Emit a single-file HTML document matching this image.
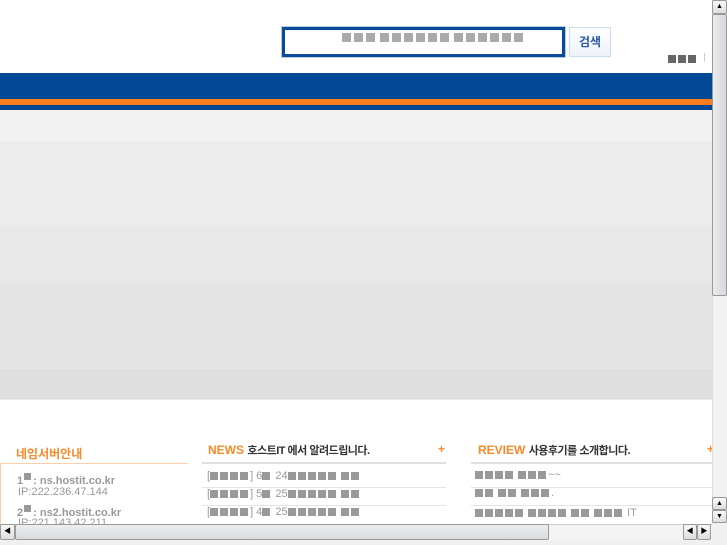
<!DOCTYPE html>
<html><head><meta charset="utf-8"><style>
*{margin:0;padding:0;box-sizing:border-box}
body{width:727px;height:545px;overflow:hidden;background:#fff;font-family:"Liberation Sans","Noto Sans CJK KR",sans-serif;position:relative}
.a{position:absolute}
.sq{display:inline-block;width:8px;height:8px;background:#999;margin-right:2px;vertical-align:middle}
.sq.d{background:#666}
.s2{display:inline-block;width:9px;height:9px;background:#aaa;margin-right:3px;vertical-align:middle}
.t{font-size:11px;color:#999;white-space:nowrap}
.line{position:absolute;height:1px;background:#e4e4e4}
</style></head><body>
<div class="a" style="left:282px;top:27px;width:283px;height:30px;border:3px solid #0a4a9a;background:#fff;box-shadow:0 0 0 1px #bcd"></div>
<div class="a" style="left:342px;top:33px;white-space:nowrap;line-height:9px"><span class="s2"></span><span class="s2"></span><span class="s2" style="margin-right:5px"></span><span class="s2"></span><span class="s2"></span><span class="s2"></span><span class="s2"></span><span class="s2"></span><span class="s2" style="margin-right:5px"></span><span class="s2"></span><span class="s2"></span><span class="s2"></span><span class="s2"></span><span class="s2"></span><span class="s2"></span></div>
<div class="a" style="left:569px;top:27px;width:42px;height:30px;border:1px solid #cddcef;background:linear-gradient(#fff,#eef3fa);color:#2a5aa8;font-size:12px;font-weight:bold;text-align:center;line-height:28px">검색</div>
<div class="a" style="left:668px;top:50px;white-space:nowrap"><span class="sq d"></span><span class="sq d"></span><span class="sq d"></span></div>
<div class="a" style="left:704px;top:53px;width:1px;height:9px;background:#ccc"></div>
<div class="a" style="left:0;top:73px;width:712px;height:26px;background:#004896"></div>
<div class="a" style="left:0;top:99px;width:712px;height:6px;background:#fb7d1b"></div>
<div class="a" style="left:0;top:105px;width:712px;height:5px;background:#004896"></div>
<div class="a" style="left:0;top:110px;width:712px;height:31px;background:#f2f2f2"></div>
<div class="a" style="left:0;top:141px;width:712px;height:86px;background:#ececec"></div>
<div class="a" style="left:0;top:227px;width:712px;height:57px;background:#e8e8e8"></div>
<div class="a" style="left:0;top:284px;width:712px;height:86px;background:#e3e4e3"></div>
<div class="a" style="left:0;top:370px;width:712px;height:29px;background:#dedede"></div>
<div class="a" style="left:0;top:399px;width:712px;height:1px;background:#e8eaee"></div>
<div class="a" style="left:16px;top:445px;font-size:12px;font-weight:bold;color:#f58a2a">네임서버안내</div>
<div class="a" style="left:0;top:463px;width:188px;height:61px;border-top:1px solid #fbcfae;border-left:1px solid #fbcfae"></div>
<div class="a" style="left:17px;top:473px;font-size:11px;font-weight:bold;color:#999">1<span class="sq" style="width:7px;height:7px;vertical-align:4px;margin:0 2px 0 1px"></span>: ns.hostit.co.kr</div>
<div class="a t" style="left:18px;top:486px">IP:222.236.47.144</div>
<div class="a" style="left:17px;top:505px;font-size:11px;font-weight:bold;color:#999">2<span class="sq" style="width:7px;height:7px;vertical-align:4px;margin:0 2px 0 1px"></span>: ns2.hostit.co.kr</div>
<div class="a t" style="left:18px;top:517px">IP:221.143.42.211</div>
<div class="a" style="left:208px;top:442px;font-size:12px;white-space:nowrap"><span style="color:#f58a2a;font-weight:bold">NEWS</span> <span style="font-size:11px;font-weight:bold;color:#333;letter-spacing:-0.5px">호스트IT 에서 알려드립니다.</span></div>
<div class="a" style="left:438px;top:442px;color:#f58a2a;font-size:12px;font-weight:bold">+</div>
<div class="a" style="left:202px;top:462px;width:244px;height:2px;background:#e0e0e0"></div>
<div class="line" style="left:202px;top:487px;width:244px"></div>
<div class="line" style="left:202px;top:505px;width:244px"></div>
<div class="a t" style="left:207px;top:470px">[<span class="sq"></span><span class="sq"></span><span class="sq"></span><span class="sq"></span>] 6<span class="sq"></span> 24<span class="sq"></span><span class="sq"></span><span class="sq"></span><span class="sq"></span><span class="sq" style="margin-right:5px"></span><span class="sq"></span><span class="sq"></span></div>
<div class="a t" style="left:207px;top:488px">[<span class="sq"></span><span class="sq"></span><span class="sq"></span><span class="sq"></span>] 5<span class="sq"></span> 25<span class="sq"></span><span class="sq"></span><span class="sq"></span><span class="sq"></span><span class="sq" style="margin-right:5px"></span><span class="sq"></span><span class="sq"></span></div>
<div class="a t" style="left:207px;top:506px">[<span class="sq"></span><span class="sq"></span><span class="sq"></span><span class="sq"></span>] 4<span class="sq"></span> 25<span class="sq"></span><span class="sq"></span><span class="sq"></span><span class="sq"></span><span class="sq" style="margin-right:5px"></span><span class="sq"></span><span class="sq"></span></div>
<div class="a" style="left:478px;top:442px;font-size:12px;white-space:nowrap"><span style="color:#f58a2a;font-weight:bold">REVIEW</span> <span style="font-size:11px;font-weight:bold;color:#333;letter-spacing:-0.5px">사용후기를 소개합니다.</span></div>
<div class="a" style="left:707px;top:442px;color:#f58a2a;font-size:12px;font-weight:bold">+</div>
<div class="a" style="left:471px;top:462px;width:241px;height:2px;background:#e0e0e0"></div>
<div class="line" style="left:471px;top:487px;width:241px"></div>
<div class="line" style="left:471px;top:505px;width:241px"></div>
<div class="a t" style="left:475px;top:469px"><span class="sq"></span><span class="sq"></span><span class="sq"></span><span class="sq" style="margin-right:5px"></span><span class="sq"></span><span class="sq"></span><span class="sq"></span>~~</div>
<div class="a t" style="left:475px;top:487px"><span class="sq"></span><span class="sq" style="margin-right:5px"></span><span class="sq"></span><span class="sq" style="margin-right:5px"></span><span class="sq"></span><span class="sq"></span><span class="sq"></span>.</div>
<div class="a t" style="left:475px;top:507px"><span class="sq"></span><span class="sq"></span><span class="sq"></span><span class="sq"></span><span class="sq" style="margin-right:5px"></span><span class="sq"></span><span class="sq"></span><span class="sq"></span><span class="sq" style="margin-right:5px"></span><span class="sq"></span><span class="sq" style="margin-right:5px"></span><span class="sq"></span><span class="sq"></span><span class="sq"></span> IT</div>
<div class="a" style="left:712px;top:0;width:15px;height:524px;background:#f2f2f2;border-left:1px solid #ddd"></div>
<div class="a" style="left:712px;top:0;width:15px;height:14px;background:linear-gradient(#f8f8f8,#ddd);border:1px solid #999;border-radius:2px;font-size:7px;text-align:center;line-height:12px">▲</div>
<div class="a" style="left:712px;top:14px;width:15px;height:282px;background:linear-gradient(90deg,#e8eaee,#d7d9dd);border:1px solid #999;border-radius:2px"></div>
<div class="a" style="left:712px;top:497px;width:15px;height:13px;background:linear-gradient(#f8f8f8,#ddd);border:1px solid #999;border-radius:2px;font-size:7px;text-align:center;line-height:11px">▲</div>
<div class="a" style="left:712px;top:510px;width:15px;height:13px;background:linear-gradient(#f8f8f8,#ddd);border:1px solid #999;border-radius:2px;font-size:7px;text-align:center;line-height:11px">▼</div>
<div class="a" style="left:0;top:524px;width:727px;height:21px;background:#f0f0f0"></div>
<div class="a" style="left:0;top:524px;width:712px;height:16px;background:#f4f4f4;border-top:1px solid #ccc"></div>
<div class="a" style="left:0;top:524px;width:15px;height:16px;background:linear-gradient(#f8f8f8,#ddd);border:1px solid #999;border-radius:2px;font-size:7px;text-align:center;line-height:14px">◀</div>
<div class="a" style="left:15px;top:524px;width:534px;height:16px;background:linear-gradient(#eceef1,#d8dade);border:1px solid #999;border-radius:2px"></div>
<div class="a" style="left:683px;top:524px;width:14px;height:16px;background:linear-gradient(#f8f8f8,#ddd);border:1px solid #999;border-radius:2px;font-size:7px;text-align:center;line-height:14px">◀</div>
<div class="a" style="left:697px;top:524px;width:14px;height:16px;background:linear-gradient(#f8f8f8,#ddd);border:1px solid #999;border-radius:2px;font-size:7px;text-align:center;line-height:14px">▶</div>
</body></html>
